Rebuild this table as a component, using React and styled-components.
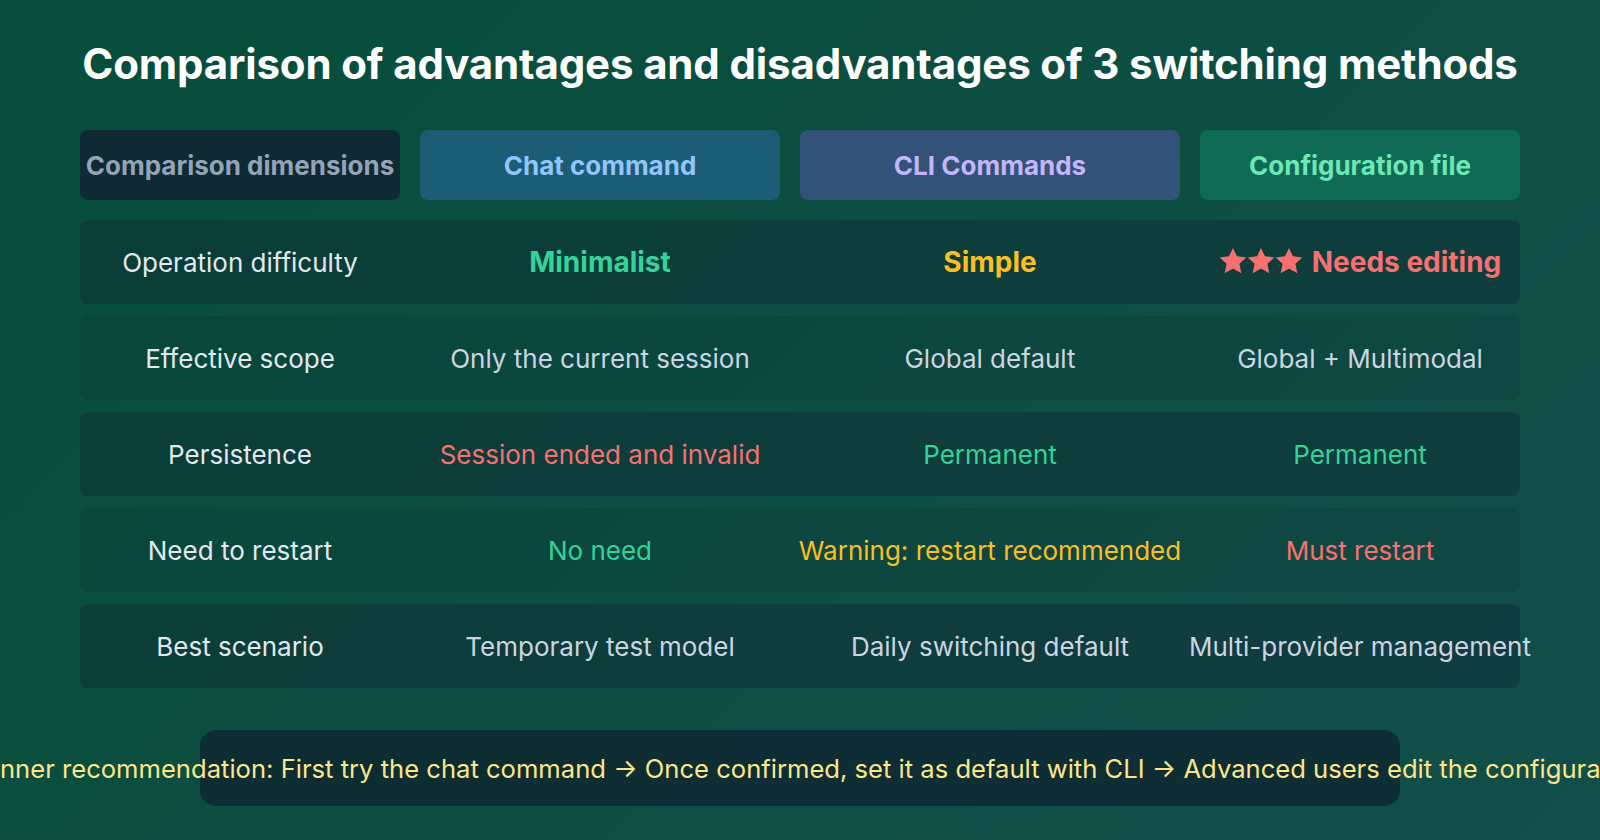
import React from 'react'
import styled, { createGlobalStyle } from 'styled-components'

const Global = createGlobalStyle`
    html, body { margin: 0; padding: 0; }
    body {
        font-family: Inter, "Noto Sans", "DejaVu Sans", sans-serif;
        background: #0c4f44;
    }
`

const Page = styled.div`
    box-sizing: border-box;
    width: 1600px;
    height: 840px;
    overflow: hidden;
    padding: 40px 80px 0;
    background: linear-gradient(135deg, #064e3b 0%, #134e4a 100%);
    display: flex;
    flex-direction: column;
    align-items: stretch;
`

const Title = styled.h1`
    margin: 0;
    font-size: 42px;
    line-height: 48px;
    font-weight: 700;
    color: #ffffff;
    text-align: center;
    letter-spacing: -0.15px;
    white-space: nowrap;
`

const Columns = `
    display: grid;
    grid-template-columns: 320px 360px 380px 320px;
    column-gap: 20px;
`

const HeadRow = styled.div`
    ${Columns}
    margin-top: 42px;
    height: 70px;
`

const HeadCell = styled.div`
    display: flex;
    align-items: center;
    justify-content: center;
    border-radius: 8px;
    background: ${p => p.$bg};
    color: ${p => p.$fg};
    font-size: 26px;
    font-weight: 700;
    white-space: nowrap;
`

const Body = styled.div`
    display: flex;
    flex-direction: column;
    gap: 12px;
    margin-top: 20px;
`

const Row = styled.div`
    ${Columns}
    height: 84px;
    border-radius: 8px;
    background: ${p => (p.$odd ? 'rgba(15, 23, 42, 0.3)' : 'rgba(15, 23, 42, 0.12)')};
`

const Cell = styled.div`
    display: flex;
    align-items: center;
    justify-content: center;
    white-space: nowrap;
    font-size: ${p => (p.$bold ? '28px' : '26px')};
    font-weight: ${p => (p.$bold ? 700 : 400)};
    color: ${p => p.$color || '#cbd5e1'};
`

const Label = styled(Cell)`
    font-size: 26px;
    font-weight: 400;
    color: #e2e8f0;
`

const Stars = styled.span`
    display: inline-flex;
    margin-right: 9px;
    margin-top: -2px;
`

const Banner = styled.div`
    align-self: center;
    width: 1200px;
    height: 76px;
    margin-top: 42px;
    border-radius: 16px;
    background: rgba(15, 23, 42, 0.6);
    display: flex;
    align-items: center;
    justify-content: center;
    white-space: nowrap;
    font-size: 25.6px;
    color: #fde68a;
`

const BannerText = styled.span`
    margin-left: 36px;
`

function Star() {
    return (
        <svg width="28" height="28" viewBox="0 0 24 24" fill="currentColor">
            <polygon points="12,0.8 15.4,8 23.4,8.9 17.5,14.4 19.1,22.4 12,18.4 4.9,22.4 6.5,14.4 0.6,8.9 8.6,8" />
        </svg>
    )
}

const heads = [
    { text: 'Comparison dimensions', bg: '#0f2a33', fg: '#94a3b8' },
    { text: 'Chat command', bg: '#1a5d75', fg: '#93c5fd' },
    { text: 'CLI Commands', bg: '#325277', fg: '#c4b5fd' },
    { text: 'Configuration file', bg: '#0f6b55', fg: '#6ee7b7' },
]

const GREEN = '#34d399'
const YELLOW = '#fbbf24'
const RED = '#f87171'

const rows = [
    {
        label: 'Operation difficulty',
        bold: true,
        cells: [
            { text: 'Minimalist', color: GREEN },
            { text: 'Simple', color: YELLOW },
            { text: 'Needs editing', color: RED, stars: 3 },
        ],
    },
    {
        label: 'Effective scope',
        cells: [
            { text: 'Only the current session' },
            { text: 'Global default' },
            { text: 'Global + Multimodal' },
        ],
    },
    {
        label: 'Persistence',
        cells: [
            { text: 'Session ended and invalid', color: RED },
            { text: 'Permanent', color: GREEN },
            { text: 'Permanent', color: GREEN },
        ],
    },
    {
        label: 'Need to restart',
        cells: [
            { text: 'No need', color: GREEN },
            { text: 'Warning: restart recommended', color: YELLOW },
            { text: 'Must restart', color: RED },
        ],
    },
    {
        label: 'Best scenario',
        cells: [
            { text: 'Temporary test model' },
            { text: 'Daily switching default' },
            { text: 'Multi-provider management' },
        ],
    },
]

export default function App() {
    return (
        <>
            <Global />
            <Page>
                <Title>Comparison of advantages and disadvantages of 3 switching methods</Title>
                <HeadRow>
                    {heads.map(h => (
                        <HeadCell key={h.text} $bg={h.bg} $fg={h.fg}>{h.text}</HeadCell>
                    ))}
                </HeadRow>
                <Body>
                    {rows.map((r, i) => (
                        <Row key={r.label} $odd={i % 2 === 0}>
                            <Label>{r.label}</Label>
                            {r.cells.map((c, j) => (
                                <Cell key={j} $color={c.color} $bold={r.bold}>
                                    {c.stars && (
                                        <Stars>
                                            {Array.from({ length: c.stars }, (_, k) => <Star key={k} />)}
                                        </Stars>
                                    )}
                                    {c.text}
                                </Cell>
                            ))}
                        </Row>
                    ))}
                </Body>
                <Banner>
                    <BannerText>
                        Beginner recommendation: First try the chat command → Once confirmed, set it as default with CLI → Advanced users edit the configuration file
                    </BannerText>
                </Banner>
            </Page>
        </>
    )
}
